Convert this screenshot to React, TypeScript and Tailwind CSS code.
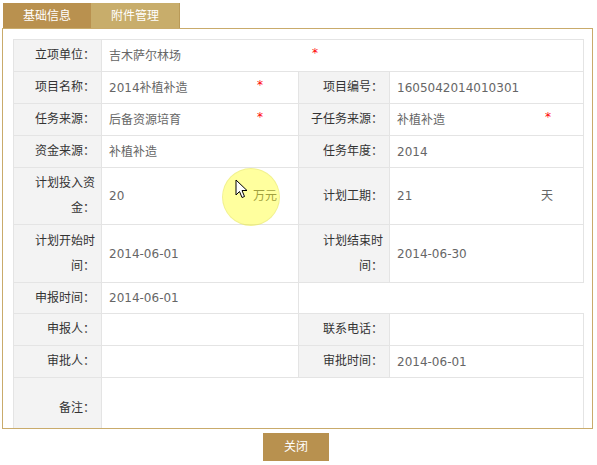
import React from "react";

const font = { fontFamily: '"DejaVu Sans", "Noto Sans CJK SC", sans-serif' };

function Label({ children, h }: { children: React.ReactNode; h: string }) {
    return (
        <div className={`${h} flex items-center justify-end text-right px-[6px] leading-[25px] bg-[#f3f3f3] text-[#333] border-r border-b border-[#e4e4e4]`}>
            <span>{children}</span>
        </div>
    );
}

function Value({ children, h, span }: { children?: React.ReactNode; h: string; span?: boolean }) {
    return (
        <div className={`${h} ${span ? "col-span-3" : ""} flex items-center pl-[7px] text-[#666] bg-white border-r border-b border-[#e4e4e4]`}>
            {children}
        </div>
    );
}

function Req() {
    return <span className="text-[#ff0000] -mt-[6px]">*</span>;
}

export default function App() {
    return (
        <div className="relative w-[597px] h-[465px] bg-white text-[12px]" style={font}>
            <div className="flex pt-[3px] pl-[3px]">
                <div className="w-[88px] h-[25px] flex items-center justify-center bg-[#b9914f] text-white">基础信息</div>
                <div className="w-[89px] h-[25px] flex items-center justify-center bg-[#c8ad6b] border-r border-[#b99a58] text-white">附件管理</div>
            </div>

            <div className="ml-[2px] w-[591px] h-[401px] border border-[#c9ab6b] overflow-hidden pt-[10px] pl-[10px]">
                <div className="grid grid-cols-[88px_197px_91px_194px] border-t border-l border-[#e4e4e4] w-[571px]">
                    <Label h="h-[32px]">立项单位：</Label>
                    <Value h="h-[32px]" span>
                        <span className="inline-block w-[203px]">吉木萨尔林场</span>
                        <Req />
                    </Value>

                    <Label h="h-[32px]">项目名称：</Label>
                    <Value h="h-[32px]">
                        <span className="inline-block w-[148px]">2014补植补造</span>
                        <Req />
                    </Value>
                    <Label h="h-[32px]">项目编号：</Label>
                    <Value h="h-[32px]">1605042014010301</Value>

                    <Label h="h-[32px]">任务来源：</Label>
                    <Value h="h-[32px]">
                        <span className="inline-block w-[148px]">后备资源培育</span>
                        <Req />
                    </Value>
                    <Label h="h-[32px]">子任务来源：</Label>
                    <Value h="h-[32px]">
                        <span className="inline-block w-[148px]">补植补造</span>
                        <Req />
                    </Value>

                    <Label h="h-[32px]">资金来源：</Label>
                    <Value h="h-[32px]">补植补造</Value>
                    <Label h="h-[32px]">任务年度：</Label>
                    <Value h="h-[32px]">2014</Value>

                    <Label h="h-[57px]">计划投入资金：</Label>
                    <Value h="h-[57px]">
                        <span className="inline-block w-[144px]">20</span>
                        <span>万元</span>
                    </Value>
                    <Label h="h-[57px]">计划工期：</Label>
                    <Value h="h-[57px]">
                        <span className="inline-block w-[144px]">21</span>
                        <span>天</span>
                    </Value>

                    <Label h="h-[58px]">计划开始时间：</Label>
                    <Value h="h-[58px]">2014-06-01</Value>
                    <Label h="h-[58px]">计划结束时间：</Label>
                    <Value h="h-[58px]">2014-06-30</Value>

                    <Label h="h-[31px]">申报时间：</Label>
                    <Value h="h-[31px]">2014-06-01</Value>
                    <div className="col-span-2 h-[31px] border-b border-[#e4e4e4]" />

                    <Label h="h-[32px]">申报人：</Label>
                    <Value h="h-[32px]" />
                    <Label h="h-[32px]">联系电话：</Label>
                    <Value h="h-[32px]" />

                    <Label h="h-[32px]">审批人：</Label>
                    <Value h="h-[32px]" />
                    <Label h="h-[32px]">审批时间：</Label>
                    <Value h="h-[32px]">2014-06-01</Value>

                    <Label h="h-[62px]">备注：</Label>
                    <Value h="h-[62px]" span />
                </div>
            </div>

            <div className="flex justify-center pr-[5px] mt-[4px]">
                <button className="w-[66px] h-[28px] bg-[#b8914f] text-white text-[12px]">关闭</button>
            </div>

            {/* cursor highlight */}
            <div className="absolute left-[222px] top-[168px] w-[58px] h-[58px] rounded-full bg-[rgba(255,255,0,0.38)] border border-[rgba(220,220,120,0.4)] pointer-events-none" />
            <svg className="absolute left-[235px] top-[179px] pointer-events-none" width="13" height="21" viewBox="0 0 13 21">
                <path d="M1 1 L1 16 L4.5 12.5 L7 18.5 L9.5 17.5 L7 11.5 L12 11.5 Z" fill="#fff" stroke="#000" strokeWidth="1" strokeLinejoin="miter" />
            </svg>
        </div>
    );
}
